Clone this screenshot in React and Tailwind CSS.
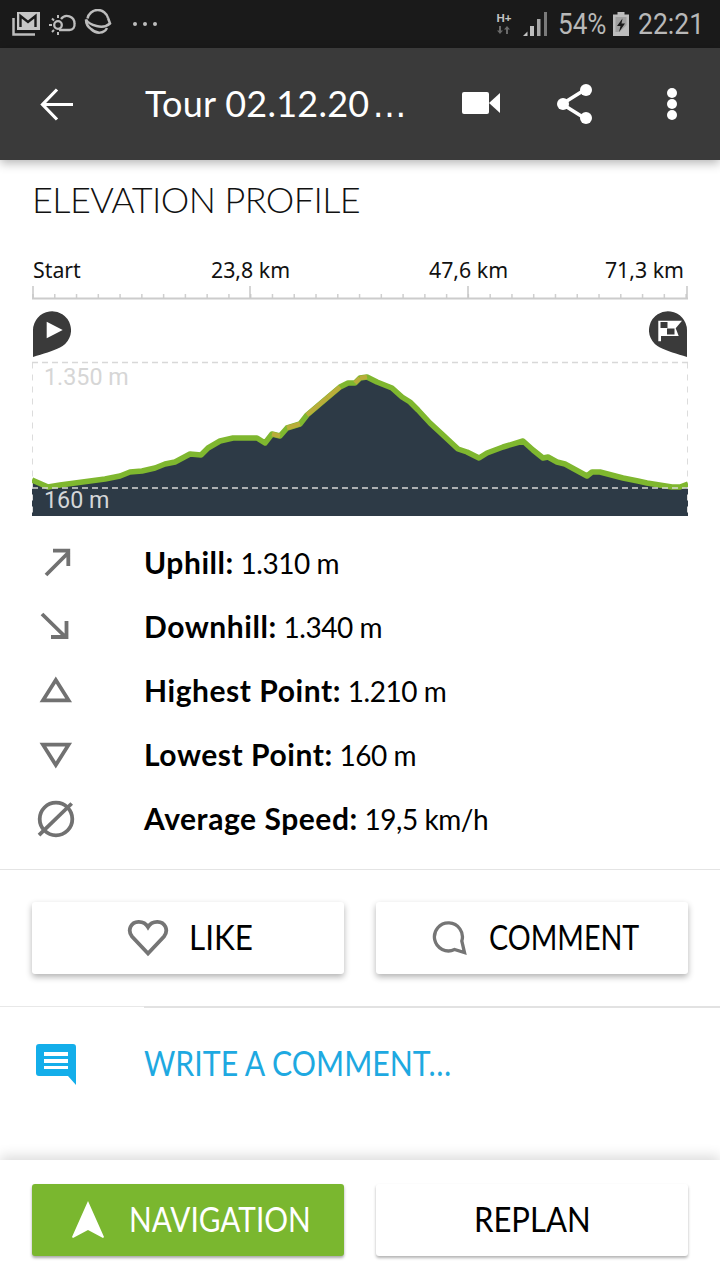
import React from "react";

const sans = "font-['Lato','Noto_Sans',sans-serif]";

// Elevation samples in chart pixels: [x, y]
const elevation = [
  [0, 124], [16, 131], [28, 129], [43, 127], [58, 125], [73, 123], [88, 120], [98, 116], [110, 115],
  [123, 112], [133, 108], [143, 106], [158, 98], [169, 99], [176, 92], [188, 85], [201, 82], [218, 82],
  [225, 82], [233, 87], [240, 78], [248, 80], [255, 72], [268, 68], [275, 59], [295, 42], [308, 31],
  [316, 27], [323, 27], [328, 22], [335, 21], [345, 26], [360, 32], [370, 41], [378, 46], [386, 54],
  [398, 67], [411, 79], [426, 93], [435, 96], [447, 102], [455, 97], [471, 91], [491, 85], [501, 94],
  [511, 102], [516, 101], [525, 106], [533, 108], [555, 120], [560, 116], [568, 116], [591, 122],
  [606, 125], [615, 127], [640, 131], [648, 131], [656, 128],
];
const linePoints = elevation.map(([x, y]) => `${x},${y}`).join(" ");
const areaPoints = `0,160 ${linePoints} 656,160`;

// Small amber stretches on the steeper climb
const amberSegments = [
  [[240, 78], [248, 80]],
  [[255, 72], [268, 68]],
  [[275, 59], [295, 42]],
  [[295, 42], [308, 31]],
  [[323, 27], [328, 22]],
  [[328, 22], [335, 21]],
];

function StatusBar() {
  return (
    <div className="h-12 bg-[#1a1a1a] flex items-center pl-[11px] pr-5 text-[#b8b8b8]">
      <svg width="30" height="30" viewBox="0 0 30 30" className="shrink-0">
        <path d="M2.500 9v16.500H24" fill="none" stroke="#bdbdbd" strokeWidth="2.500" />
        <rect x="6" y="3" width="23" height="18" fill="#c6c6c6" />
        <path d="M9.500 18V7l7.500 6 7.500-6v11" fill="none" stroke="#1a1a1a" strokeWidth="2.400" />
      </svg>
      <svg width="30" height="30" viewBox="0 0 30 30" className="ml-[6px] shrink-0" fill="none" stroke="#bdbdbd" strokeWidth="2.300">
        <path d="M14 10a7.500 7.500 0 0 1 13.500 4.500c.5 3.500-1.500 6.500-5 6.500H12" />
        <circle cx="11" cy="16" r="3.800" />
        <path d="M11 6v3M2 16h3M5 9.500l2 2M5 23l2-2M11 23v3" strokeWidth="2" />
      </svg>
      <svg width="30" height="30" viewBox="0 0 30 30" className="ml-[6px] shrink-0" fill="none" stroke="#bdbdbd" strokeWidth="2.500">
        <path d="M4.500 9.500A10.500 10.500 0 0 1 25 9" />
        <path d="M3 10.500C6 16 20 21 27 14.500L25 9" />
        <path d="M3 10.500C3 15 5 18 8 20 13 25 21 25 24 19" />
      </svg>
      <div className="ml-5 flex gap-[6px]">
        <span className="w-1 h-1 rounded-full bg-[#bdbdbd]" />
        <span className="w-1 h-1 rounded-full bg-[#bdbdbd]" />
        <span className="w-1 h-1 rounded-full bg-[#bdbdbd]" />
      </div>
      <div className="ml-auto flex items-center">
        <div className="w-4 flex flex-col items-center mr-[10px] -mt-[2px]">
          <span className="font-['Liberation_Sans',sans-serif] font-bold text-[11.5px] leading-[13px] text-[#c4c4c4]">H+</span>
          <svg width="14" height="8" viewBox="0 0 14 8" fill="#6a6a6a" className="mt-[1px]">
            <path d="M3 8 0 4.500h2V0h2v4.500h2zM10 0l3 3.500h-2V8H9V3.500H7z" />
          </svg>
        </div>
        <svg width="25" height="24" viewBox="0 0 25 24" className="mr-[11px] shrink-0">
          <path d="M1 24h4.500v-4.500z" fill="#c4c4c4" />
          <rect x="8" y="14" width="4" height="10" fill="#bdbdbd" />
          <rect x="15" y="7" width="3.500" height="17" fill="#a6a6a6" />
          <rect x="22" y="0" width="3" height="24" fill="#7a7a7a" />
        </svg>
        <span className="font-['Roboto',sans-serif] text-[30px] leading-none scale-x-[0.87] origin-left w-[55px] whitespace-nowrap">54%</span>
        <svg width="16" height="24" viewBox="0 0 16 24" className="mr-[9px] shrink-0">
          <path d="M4.500 0h7v2.500H16V24H0V2.500h4.500z" fill="#bdbdbd" />
          <path d="M2.500 5h11v8l-7 7h-4z" fill="#8a8a8a" opacity="0.6" />
          <path d="M9.500 6.500 4 14h3.500L6 20l6-8.500H8.500z" fill="#1a1a1a" />
        </svg>
        <span className="font-['Roboto',sans-serif] text-[30px] leading-none scale-x-[0.885] origin-left w-[62px] whitespace-nowrap">22:21</span>
      </div>
    </div>
  );
}

function Toolbar() {
  return (
    <div className="relative z-10 h-[112px] bg-[#3a3a3a] flex items-center shadow-[0_3px_10px_rgba(0,0,0,0.3)]">
      <div className="w-[112px] pl-10 shrink-0">
        <svg width="33" height="33" viewBox="0 0 33 33" fill="none" stroke="#fff" strokeWidth="3.200">
          <path d="M33 16.500H3M17 1.500 2.500 16.500 17 31.500" />
        </svg>
      </div>
      <span className={`${sans} ml-[33px] text-white text-[36px] leading-none tracking-[0.25px] whitespace-nowrap w-[317px] -mt-[1px]`}>
        Tour 02.12.20<span className="font-['DejaVu_Sans',sans-serif] text-[34px] ml-[3px]">…</span>
      </span>
      <svg width="38" height="24" viewBox="0 0 38 24" className="shrink-0 -mt-[2px]" fill="#fff">
        <rect width="27" height="22" y="1" rx="2" />
        <path d="M27 12 38 2v20z" />
      </svg>
      <svg width="38" height="42" viewBox="0 0 38 42" className="ml-[56px] shrink-0 -mt-[1px]">
        <path d="M6 21 30 6M6 21l24 15" stroke="#fff" strokeWidth="3.500" />
        <circle cx="7" cy="21" r="6" fill="#fff" />
        <circle cx="30" cy="7" r="6" fill="#fff" />
        <circle cx="30" cy="35" r="6" fill="#fff" />
      </svg>
      <div className="ml-[73px] flex flex-col gap-[1px] -mt-[1px]">
        <span className="w-[10px] h-[10px] rounded-full bg-white" />
        <span className="w-[10px] h-[10px] rounded-full bg-white" />
        <span className="w-[10px] h-[10px] rounded-full bg-white" />
      </div>
    </div>
  );
}

function Ruler() {
  const majors = [1, 218, 436, 655];
  const minors = Array.from({ length: 31 }, (_, i) => 1 + i * 21.77);
  return (
    <svg width="656" height="14" viewBox="0 0 656 14" className="block">
      {minors.map((x) => (
        <rect key={x} x={x - 0.75} y="8" width="1.500" height="4" fill="#cfcfcf" />
      ))}
      {majors.map((x) => (
        <rect key={x} x={x - 0.75} y="0" width="1.500" height="12" fill="#c8c8c8" />
      ))}
      <rect x="0" y="11.500" width="656" height="2" fill="#cccccc" />
    </svg>
  );
}

function ElevationChart() {
  return (
    <div className="relative h-[160px]">
      <svg width="656" height="160" viewBox="0 0 656 160" className="block">
        <polygon points={areaPoints} fill="#2d3a46" />
        <path d="M.5 6.500V160" stroke="#dcdcdc" strokeDasharray="6 6" fill="none" />
        <path d="M655.500 6.500V160" stroke="#dcdcdc" strokeDasharray="6 6" fill="none" />
        <path d="M0 6.500H656" stroke="#d8d8d8" strokeWidth="1.500" strokeDasharray="6 4" fill="none" />
        <polyline points={linePoints} fill="none" stroke="#7fb72f" strokeWidth="5.500" strokeLinejoin="round" />
        {amberSegments.map(([a, b]) => (
          <line key={a[0]} x1={a[0]} y1={a[1]} x2={b[0]} y2={b[1]} stroke="#b9ad3a" strokeWidth="4.500" />
        ))}
        <path d="M0 132H656" stroke="#d8d8d8" strokeWidth="1.500" strokeDasharray="6 4" fill="none" />
      </svg>
      <span className="absolute left-3 top-[10px] font-['Roboto',sans-serif] text-[23.300px] leading-none text-[#d6d6d6]">1.350 m</span>
      <span className="absolute left-3 top-[133px] font-['Roboto',sans-serif] text-[23.300px] leading-none text-[#d4d6d8]">160 m</span>
    </div>
  );
}

function StatIcon({ kind }) {
  const stroke = { fill: "none", stroke: "#717171", strokeWidth: 3.800 };
  return (
    <svg width="48" height="48" viewBox="0 0 48 48" className="shrink-0">
      {kind === "up" && <path d="M14 37 36 15M21 12.700h15.300V28" {...stroke} />}
      {kind === "down" && <path d="M10 12l23 22.500M19 35h15.500V19" {...stroke} />}
      {kind === "high" && <path d="M23.800 14 36.600 34.300H11z" {...stroke} />}
      {kind === "low" && <path d="M11 14.700H36.600L23.800 35z" {...stroke} />}
      {kind === "avg" && (
        <g {...stroke}>
          <circle cx="24" cy="25" r="16.300" />
          <path d="M7 41.200 39.700 9.500" />
        </g>
      )}
    </svg>
  );
}

const stats = [
  { kind: "up", label: "Uphill:", value: "1.310 m" },
  { kind: "down", label: "Downhill:", value: "1.340 m" },
  { kind: "high", label: "Highest Point:", value: "1.210 m" },
  { kind: "low", label: "Lowest Point:", value: "160 m" },
  { kind: "avg", label: "Average Speed:", value: "19,5 km/h" },
];

function StatRow({ kind, label, value }) {
  return (
    <div className="h-16 flex items-center pl-8">
      <StatIcon kind={kind} />
      <p className={`${sans} ml-16 text-[28px] leading-none text-black whitespace-nowrap tracking-[-0.45px]`}>
        <span className="font-bold text-[30px] tracking-[0.55px]">{label}</span> {value}
      </p>
    </div>
  );
}

export default function App() {
  return (
    <div className="relative w-[720px] h-[1280px] bg-white flex flex-col overflow-hidden">
      <StatusBar />
      <Toolbar />

      <main className="flex-1 min-h-0 flex flex-col">
        <div className="px-8">
          <h1 className={`${sans} font-light pt-5 text-[36px] leading-[38px] text-[#111] tracking-[-0.6px] whitespace-nowrap`}>ELEVATION PROFILE</h1>

          <div className="mt-[39px] relative h-[26px] font-['Noto_Sans',sans-serif] text-[21.300px] leading-[26px] text-[#111]">
            <span className="absolute left-[1px] top-0">Start</span>
            <span className="absolute left-[179px] top-0 whitespace-nowrap">23,8 km</span>
            <span className="absolute left-[397px] top-0 whitespace-nowrap">47,6 km</span>
            <span className="absolute right-[4px] top-0 whitespace-nowrap">71,3 km</span>
          </div>
          <div className="mt-[3px]">
            <Ruler />
          </div>

          <div className="mt-[11px] h-[46px] flex justify-between">
            <svg width="39" height="47" viewBox="0 0 39 47">
              <path d="M1 19a19 19 0 1 1 27 17.500C21 40 11 43 1 46z" fill="#3a3a3a" />
              <path d="M14.700 10.700 30.700 19 14.700 27.300z" fill="#fff" />
            </svg>
            <svg width="39" height="47" viewBox="0 0 39 47">
              <path d="M38 19a19 19 0 1 0-27 17.500C18 40 28 43 38 46z" fill="#3a3a3a" />
              <path d="M9.300 9.700H33l-6.300 7.600 3 7.700H12v5.300H9.300z" fill="#fff" />
              <rect x="11.500" y="11" width="7" height="6" fill="#3a3a3a" />
              <rect x="18" y="17.500" width="7.500" height="6" fill="#3a3a3a" />
            </svg>
          </div>

          <div className="-mt-[1px]">
            <ElevationChart />
          </div>
        </div>

        <section className="mt-[14px]">
          {stats.map((s) => (
            <StatRow key={s.kind} {...s} />
          ))}
        </section>

        <div className="mt-[19px] border-t border-[#e4e4e4] h-[137px] flex items-start justify-between px-8 pt-8">
          <button className={`h-[72px] w-[312px] rounded-[3px] bg-white text-black flex items-center pl-[95px] ${sans} text-[34px] leading-none shadow-[0_3px_6px_rgba(0,0,0,0.3)]`}>
            <svg width="42" height="38" viewBox="0 0 42 38" className="shrink-0" fill="none" stroke="#757575" strokeWidth="3.800">
              <path d="M21 34.500 5 17.500C0 11 4 3 11.500 2.800c4-.1 7.500 1.700 9.500 5.200 2-3.500 5.500-5.300 9.500-5.200C38 3 42 11 37 17.500z" />
            </svg>
            <span className="ml-5 -mt-[2px] inline-block scale-x-[0.925] origin-left w-[62px] text-left whitespace-nowrap">LIKE</span>
          </button>
          <button className={`h-[72px] w-[312px] rounded-[3px] bg-white text-black flex items-center pl-14 ${sans} text-[34px] leading-none shadow-[0_3px_6px_rgba(0,0,0,0.3)]`}>
            <svg width="36" height="36" viewBox="0 0 36 36" className="shrink-0" fill="none" stroke="#757575" strokeWidth="3.300">
              <path d="M22.500 29.500A14 14 0 1 1 29.800 21L32.500 32.500z" />
            </svg>
            <span className="ml-[21px] -mt-[2px] inline-block scale-x-[0.843] origin-left w-[150px] text-left whitespace-nowrap">COMMENT</span>
          </button>
        </div>

        <div className="flex">
          <div className="w-[144px] h-px bg-[#e8e8e8]" />
          <div className="flex-1 h-[2px] bg-[#e2e2e2]" />
        </div>

        <div className="h-[112px] flex items-start pl-9 pt-9">
          <svg width="40" height="41" viewBox="0 0 40 41" className="shrink-0">
            <path d="M3 0h34a3 3 0 0 1 3 3v38l-8-9H3a3 3 0 0 1-3-3V3a3 3 0 0 1 3-3z" fill="#14aeea" />
            <path d="M8 8h24v4H8zM8 15h24v4H8zM8 22h24v3H8z" fill="#fff" />
          </svg>
          <span className={`${sans} ml-[68px] text-[34px] leading-[38px] text-[#1ea9e1] inline-block scale-x-[0.89] origin-left whitespace-nowrap`}>WRITE A COMMENT…</span>
        </div>
      </main>

      <footer className="relative h-[120px] bg-white flex items-start justify-between px-8 pt-6 shadow-[0_-4px_12px_rgba(0,0,0,0.14)]">
        <button className={`h-[72px] w-[312px] rounded-[3px] bg-[#7ab72f] text-white flex items-center pl-10 ${sans} text-[34px] leading-none shadow-[0_2px_3px_rgba(0,0,0,0.35)]`}>
          <svg width="32" height="38" viewBox="0 0 32 38" className="shrink-0">
            <path d="M16 0 32 36l-1 1-15-8-15 8-1-1z" fill="#fff" />
          </svg>
          <span className="ml-[25px] -mt-[2px] inline-block scale-x-[0.875] origin-left w-[181px] text-left whitespace-nowrap">NAVIGATION</span>
        </button>
        <button className={`h-[72px] w-[312px] rounded-[3px] bg-white text-black flex items-center pl-[98px] ${sans} text-[34px] leading-none shadow-[0_2px_3px_rgba(0,0,0,0.3)]`}>
          <span className="-mt-[2px] inline-block scale-x-[0.913] origin-left w-[115px] text-left whitespace-nowrap">REPLAN</span>
        </button>
      </footer>
    </div>
  );
}
